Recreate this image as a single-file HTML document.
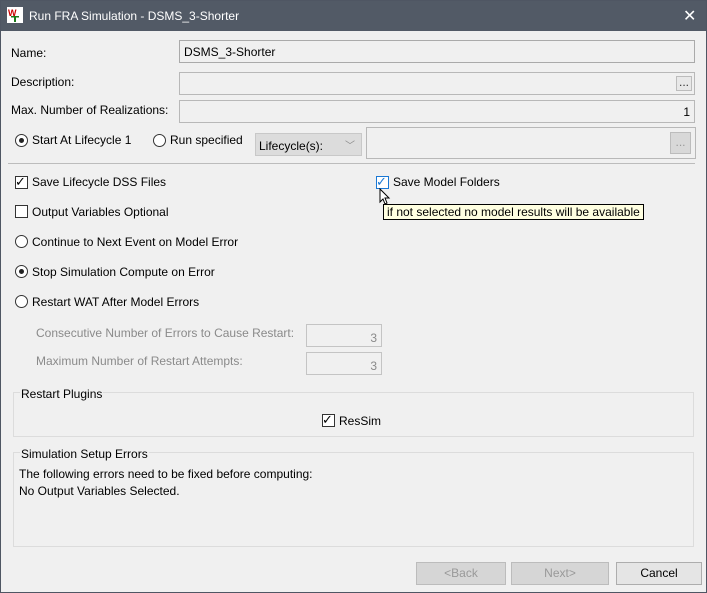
<!DOCTYPE html>
<html><head><style>
body{margin:0;width:707px;height:593px;overflow:hidden;font-family:"Liberation Sans",sans-serif;font-size:12px;color:#000}
#w{position:absolute;left:0;top:0;width:707px;height:593px;background:#f0f0f0}
#bd{position:absolute;left:0;top:0;width:705px;height:591px;border:1px solid #4f5663;z-index:5;pointer-events:none}
.a{position:absolute;white-space:nowrap}
#tb{position:absolute;left:0;top:0;width:707px;height:31px;background:#525a66;color:#fff;font-size:12px}
.f{position:absolute;background:#f0f0f0;border:1px solid #b8b8b8;box-sizing:border-box}
.btn{position:absolute;box-sizing:border-box;border:1px solid #bcbcbc;background:#d6d6d6;color:#999;text-align:center;line-height:21px}
.cb{position:absolute;width:11px;height:11px;border:1px solid #333;background:#fff}
.rb{position:absolute;width:11px;height:11px;border:1px solid #333;border-radius:50%;background:#fff}
.rb.on::after{content:"";position:absolute;left:3px;top:3px;width:5px;height:5px;border-radius:50%;background:#222}
.g{position:absolute;border:1px solid #dcdcdc;box-sizing:border-box}
.gray{color:#8a8a8a}
</style></head><body><div id="w">
<div id="tb">
<svg class="a" style="left:7px;top:7px" width="16" height="16"><rect width="16" height="16" fill="#fff"/><text x="1" y="9" font-size="9" font-weight="bold" fill="#c00" font-family="Liberation Sans">W</text><rect x="7" y="9" width="2" height="6" fill="#1a7a1a"/><rect x="4" y="9" width="8" height="1.5" fill="#1a7a1a"/></svg>
<span class="a" style="left:29px;top:9px">Run FRA Simulation - DSMS_3-Shorter</span>
<span class="a" style="left:683px;top:6px;font-size:16px">✕</span>
</div>
<span class="a" style="left:11px;top:46px">Name:</span>
<div class="f" style="left:179px;top:40px;width:516px;height:23px;border-color:#aaa"><span class="a" style="left:4px;top:4px">DSMS_3-Shorter</span></div>
<span class="a" style="left:11px;top:75px">Description:</span>
<div class="f" style="left:179px;top:72px;width:516px;height:23px"><div class="btn" style="left:496px;top:3px;width:16px;height:15px;line-height:10px;color:#333;background:#e8e8e8">...</div></div>
<span class="a" style="left:11px;top:103px">Max. Number of Realizations:</span>
<div class="f" style="left:179px;top:100px;width:516px;height:23px"><span class="a" style="right:4px;top:4px">1</span></div>
<div class="rb on" style="left:15px;top:134px"></div><span class="a" style="left:32px;top:133px">Start At Lifecycle 1</span>
<div class="rb" style="left:153px;top:134px"></div><span class="a" style="left:170px;top:133px">Run specified</span>
<div class="f" style="left:255px;top:133px;width:107px;height:23px;background:#dcdcdc;border-color:#c8c8c8"><span class="a" style="left:3px;top:5px">Lifecycle(s):</span><span class="a gray" style="left:89px;top:3px;font-size:10px">﹀</span></div>
<div class="f" style="left:366px;top:127px;width:330px;height:32px"><div class="btn" style="left:303px;top:4px;width:21px;height:22px;line-height:18px;color:#999;background:#d8d8d8">...</div></div>
<div class="a" style="left:8px;top:163px;width:687px;height:1px;background:#bcbcbc"></div>
<div class="cb" style="left:15px;top:176px"></div><span class="a" style="left:15px;top:174px;font-size:13px">✓</span><span class="a" style="left:32px;top:175px">Save Lifecycle DSS Files</span>
<div class="cb" style="left:376px;top:176px;border-color:#1a78d4"></div><span class="a" style="left:376px;top:174px;font-size:13px;color:#1a78d4">✓</span><span class="a" style="left:393px;top:175px">Save Model Folders</span>
<svg class="a" style="left:379px;top:188px" width="12" height="18"><path d="M1 1 L1 14 L4 11 L6 16 L8 15 L6 10 L10 10 Z" fill="#fff" stroke="#000" stroke-width="1"/></svg>
<div class="a" style="left:383px;top:204px;background:#ffffe1;border:1px solid #000;padding:0 3px;line-height:14px">if not selected no model results will be available</div>
<div class="cb" style="left:15px;top:205px"></div><span class="a" style="left:32px;top:205px">Output Variables Optional</span>
<div class="rb" style="left:15px;top:235px"></div><span class="a" style="left:32px;top:235px">Continue to Next Event on Model Error</span>
<div class="rb on" style="left:15px;top:265px"></div><span class="a" style="left:32px;top:265px">Stop Simulation Compute on Error</span>
<div class="rb" style="left:15px;top:295px"></div><span class="a" style="left:32px;top:295px">Restart WAT After Model Errors</span>
<span class="a gray" style="left:36px;top:326px">Consecutive Number of Errors to Cause Restart:</span>
<div class="f" style="left:306px;top:324px;width:76px;height:23px;border-color:#c4c4c4"><span class="a gray" style="right:4px;top:6px">3</span></div>
<span class="a gray" style="left:36px;top:354px">Maximum Number of Restart Attempts:</span>
<div class="f" style="left:306px;top:352px;width:76px;height:23px;border-color:#c4c4c4"><span class="a gray" style="right:4px;top:6px">3</span></div>
<div class="g" style="left:13px;top:392px;width:681px;height:45px"></div>
<span class="a" style="left:20px;top:387px;background:#f0f0f0;padding:0 1px">Restart Plugins</span>
<div class="cb" style="left:322px;top:414px"></div><span class="a" style="left:322px;top:412px;font-size:13px">✓</span><span class="a" style="left:339px;top:414px">ResSim</span>
<div class="g" style="left:13px;top:452px;width:681px;height:95px"></div>
<span class="a" style="left:20px;top:447px;background:#f0f0f0;padding:0 1px">Simulation Setup Errors</span>
<span class="a" style="left:19px;top:467px">The following errors need to be fixed before computing:</span>
<span class="a" style="left:19px;top:484px">No Output Variables Selected.</span>
<div class="btn" style="left:416px;top:562px;width:90px;height:23px">&lt;Back</div>
<div class="btn" style="left:511px;top:562px;width:98px;height:23px">Next&gt;</div>
<div class="btn" style="left:616px;top:562px;width:86px;height:23px;background:#e5e5e5;border-color:#adadad;color:#000">Cancel</div>
<div id="bd"></div>
</div></body></html>
